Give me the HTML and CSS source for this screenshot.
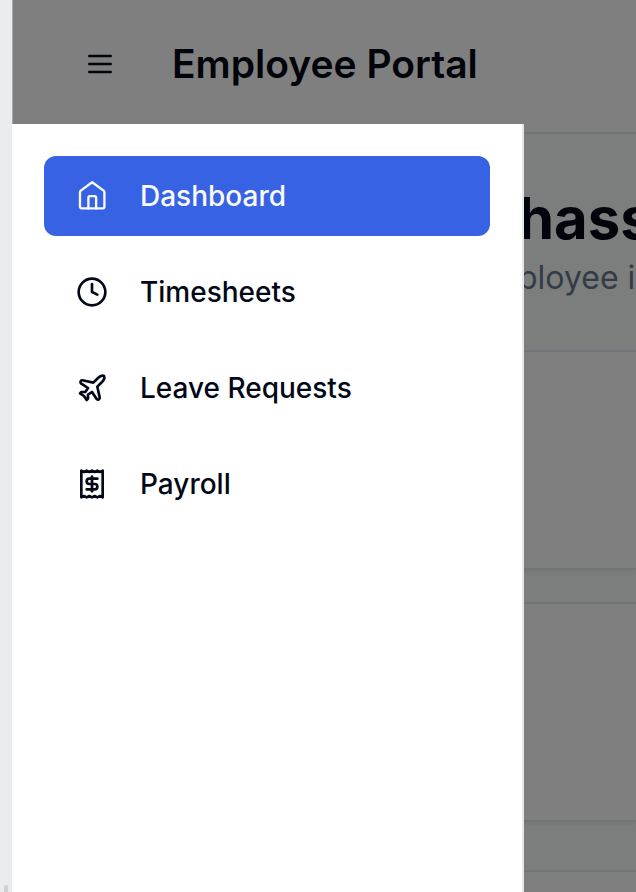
FILE: index.html
```html
<!DOCTYPE html>
<html lang="en">
<head>
<meta charset="utf-8">
<meta name="viewport" content="width=device-width, initial-scale=1">
<title>Employee Portal</title>
<link rel="stylesheet" href="styles.css">
</head>
<body>
<div class="gutter"><span class="gutter-thumb"></span></div>
<div class="app">
  <header class="topbar">
    <button class="menu-button" type="button" aria-label="Toggle menu">
      <svg class="icon" viewBox="0 0 24 24"><path d="M4 6h16M4 12h16M4 18h16"/></svg>
    </button>
    <div class="brand">Employee Portal</div>
  </header>
  <main class="page">
    <section class="hero">
      <h1 class="hero-title">hass</h1>
      <p class="hero-text">ployee i</p>
    </section>
    <section class="card"></section>
    <section class="card"></section>
    <section class="card card-last"></section>
  </main>
  <div class="backdrop"></div>
  <nav class="drawer" aria-label="Main">
    <a class="nav-link active" href="#dashboard" aria-current="page">
      <svg class="icon icon-light" viewBox="0 0 24 24"><path d="M3 9.2c0-.5.2-.9.6-1.2L12.1 1.7 20.7 8c.4.3.6.7.6 1.2v10.9c0 .7-.5 1.2-1.2 1.2H4.2c-.7 0-1.2-.5-1.2-1.2z"/><path d="M9.3 21.3v-8c0-.7.5-1.2 1.2-1.2h3.4c.7 0 1.2.5 1.2 1.2v8"/></svg>
      Dashboard
    </a>
    <a class="nav-link" href="#timesheets">
      <svg class="icon" viewBox="0 0 24 24"><circle cx="12" cy="12" r="10"/><path d="M12 6v6l4 2"/></svg>
      Timesheets
    </a>
    <a class="nav-link" href="#leave">
      <svg class="icon" viewBox="0 0 24 24"><path d="M17.8 19.2 16 11l3.5-3.5C21 6 21.5 4 21 3c-1-.5-3 0-4.5 1.5L13 8 4.8 6.2c-.5-.1-.9.1-1.1.5l-.3.5c-.2.5-.1 1 .3 1.3L9 12l-2 3H4l-1 1 3 2 2 3 1-1v-3l3-2 3.5 5.3c.3.4.8.5 1.3.3l.5-.2c.4-.3.6-.7.5-1.2z"/></svg>
      Leave Requests
    </a>
    <a class="nav-link" href="#payroll">
      <svg class="icon" viewBox="0 0 24 24"><path d="M4 2v20l2-1 2 1 2-1 2 1 2-1 2 1 2-1 2 1V2l-2 1-2-1-2 1-2-1-2 1-2-1-2 1Z"/><path d="M16 8h-6a2 2 0 1 0 0 4h4a2 2 0 1 1 0 4H8"/><path d="M12 17.5v-11"/></svg>
      Payroll
    </a>
  </nav>
</div>
</body>
</html>
```
FILE: styles.css
```css
* {
  box-sizing: border-box;
}

body {
  margin: 0;
  min-height: 100vh;
  display: flex;
  background: #ebecee;
  color: #020817;
  font-family: Inter, "Liberation Sans", sans-serif;
}

.gutter {
  flex: 0 0 12px;
  display: flex;
  align-items: flex-end;
  padding-left: 4px;
}

.gutter-thumb {
  width: 4px;
  height: 7px;
  border-radius: 2px 2px 0 0;
  background: #cfd0d2;
}

.app {
  position: relative;
  flex: 1;
  min-width: 0;
  height: 100vh;
  overflow: hidden;
  background: #f8fdfa;
}

.topbar {
  display: flex;
  align-items: center;
  gap: 32px;
  padding: 24px 48px 28px;
  background: #fff;
  border-bottom: 2px solid #e2e8f0;
}

.menu-button {
  display: grid;
  place-items: center;
  width: 80px;
  height: 80px;
  padding: 0;
  border: 0;
  background: none;
  color: inherit;
}

.icon {
  flex: none;
  width: 32px;
  height: 32px;
  fill: none;
  stroke: currentColor;
  stroke-width: 2;
  stroke-linecap: round;
  stroke-linejoin: round;
}

.icon-light {
  stroke-width: 1.75;
}

.brand {
  font-size: 39px;
  font-weight: 600;
  line-height: 56px;
}

.hero {
  padding: 48px 0 48px 506px;
  white-space: nowrap;
}

.hero-title {
  margin: 0;
  font-size: 58px;
  font-weight: 700;
  line-height: 72px;
}

.hero-text {
  margin: 0;
  color: #6b7689;
  font-size: 32px;
  line-height: 48px;
}

.card {
  height: 220px;
  margin-bottom: 32px;
  background: #fff;
  border-block: 2px solid #e2e8f0;
  box-shadow: 0 2px 4px rgba(0, 0, 0, 0.06);
}

.card-last {
  margin-top: 48px;
}

.backdrop {
  position: absolute;
  inset: 0;
  background: rgba(0, 0, 0, 0.5);
  background-clip: padding-box;
  border-left: 1px solid rgba(0, 0, 0, 0.35);
}

.drawer {
  position: absolute;
  top: 124px;
  bottom: 0;
  left: 0;
  width: 512px;
  max-width: 100%;
  display: flex;
  flex-direction: column;
  gap: 16px;
  padding: 32px;
  background: #fff;
  border-right: 2px solid #e5e7eb;
}

.nav-link {
  display: flex;
  align-items: center;
  gap: 32px;
  padding: 20px 32px;
  border-radius: 12px;
  color: inherit;
  font-size: 28px;
  font-weight: 500;
  line-height: 40px;
  text-decoration: none;
}

.nav-link.active {
  background: #3862e4;
  color: #f8fafc;
}
```
